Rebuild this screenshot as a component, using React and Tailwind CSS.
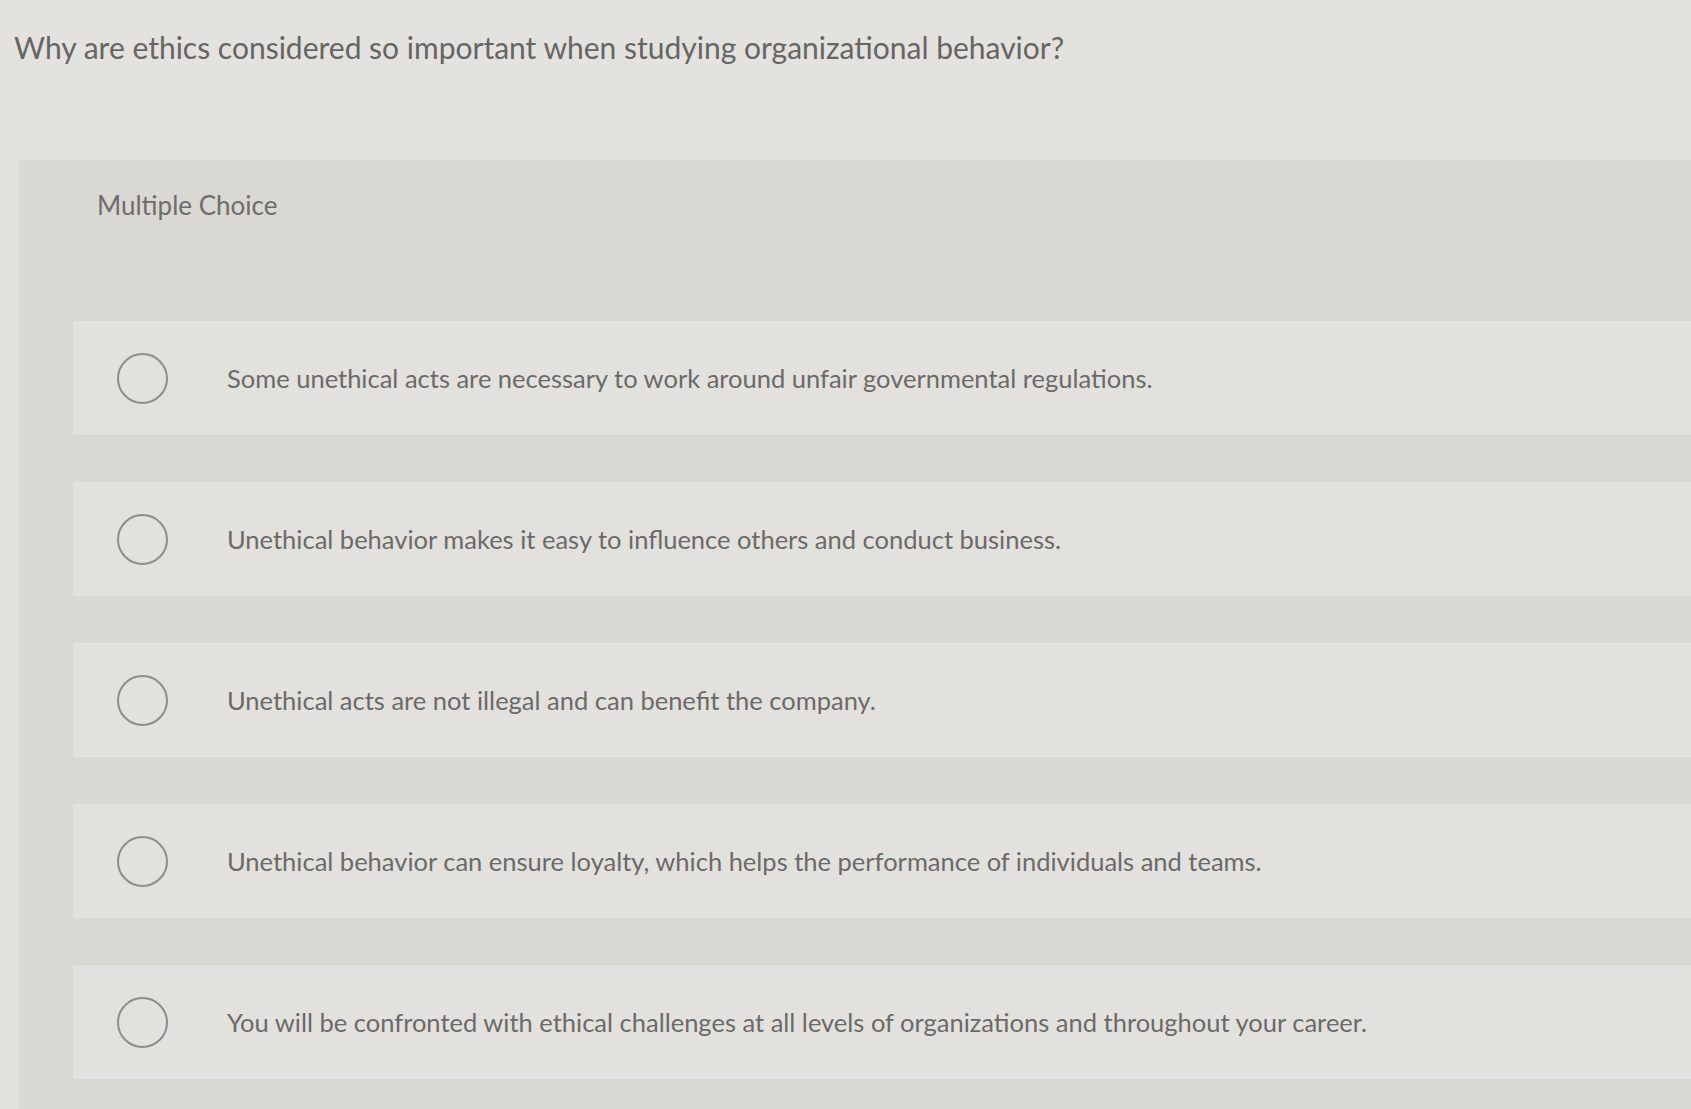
import React from 'react';

const options = [
    'Some unethical acts are necessary to work around unfair governmental regulations.',
    'Unethical behavior makes it easy to influence others and conduct business.',
    'Unethical acts are not illegal and can benefit the company.',
    'Unethical behavior can ensure loyalty, which helps the performance of individuals and teams.',
    'You will be confronted with ethical challenges at all levels of organizations and throughout your career.',
];

const App = () => {
    return (
        <div className="w-[1691px] h-[1109px] overflow-hidden bg-[#e4e2de] text-[#6a6a6a] font-['Lato','Liberation_Sans',sans-serif]">
            {/* Question */}
            <h1 className="pl-[14px] pt-[27px] text-[30px] leading-[40px] font-normal text-[#666564]">
                Why are ethics considered so important when studying organizational behavior?
            </h1>

            {/* Answer panel */}
            <div className="ml-[19px] mt-[93px] bg-[#dad8d3] pt-[30px] pb-[40px]">
                <div className="pl-[78px] text-[26px] leading-[30px] text-[#6e6d6b]">Multiple Choice</div>

                <div className="mt-[101px] ml-[54px] flex flex-col gap-[47px]">
                    {options.map((opt, i) => (
                        <label key={i} className="h-[114px] bg-[#e3e1dd] flex items-center cursor-pointer">
                            <span className="ml-[44px] w-[51px] h-[51px] rounded-full border-2 border-[#8e8d8b] shrink-0" />
                            <span className="ml-[59px] text-[25.5px] leading-[30px] text-[#6b6a68]">{opt}</span>
                        </label>
                    ))}
                </div>
            </div>
        </div>
    );
};

export default App;
